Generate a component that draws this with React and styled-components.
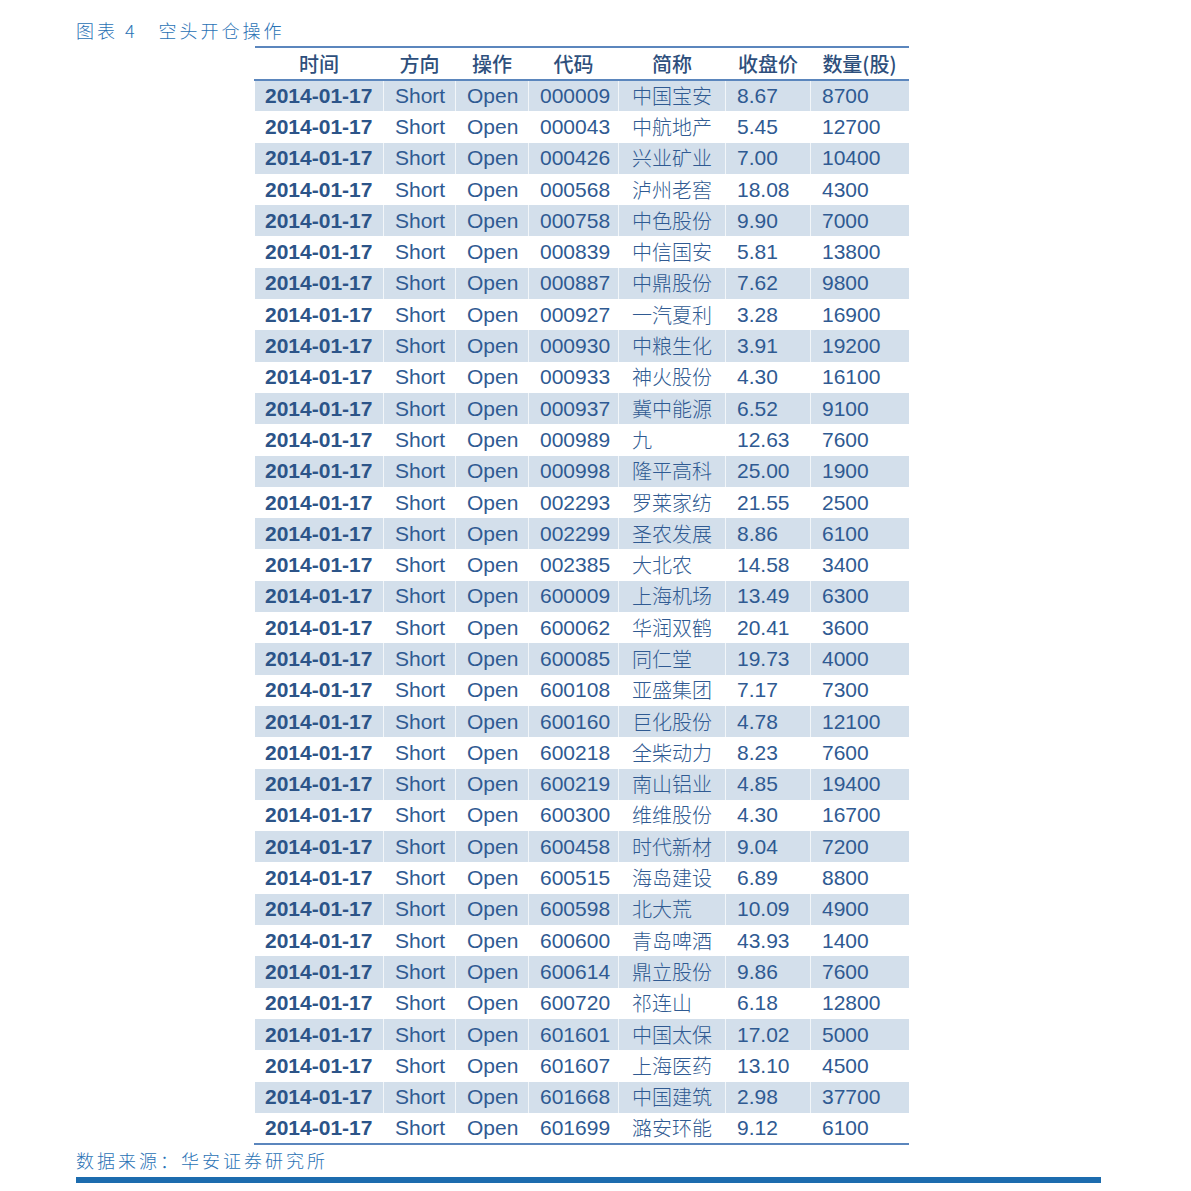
import styled, { createGlobalStyle } from 'styled-components'

const rows = [
  ['000009', '中国宝安', '8.67', '8700'],
  ['000043', '中航地产', '5.45', '12700'],
  ['000426', '兴业矿业', '7.00', '10400'],
  ['000568', '泸州老窖', '18.08', '4300'],
  ['000758', '中色股份', '9.90', '7000'],
  ['000839', '中信国安', '5.81', '13800'],
  ['000887', '中鼎股份', '7.62', '9800'],
  ['000927', '一汽夏利', '3.28', '16900'],
  ['000930', '中粮生化', '3.91', '19200'],
  ['000933', '神火股份', '4.30', '16100'],
  ['000937', '冀中能源', '6.52', '9100'],
  ['000989', '九', '12.63', '7600'],
  ['000998', '隆平高科', '25.00', '1900'],
  ['002293', '罗莱家纺', '21.55', '2500'],
  ['002299', '圣农发展', '8.86', '6100'],
  ['002385', '大北农', '14.58', '3400'],
  ['600009', '上海机场', '13.49', '6300'],
  ['600062', '华润双鹤', '20.41', '3600'],
  ['600085', '同仁堂', '19.73', '4000'],
  ['600108', '亚盛集团', '7.17', '7300'],
  ['600160', '巨化股份', '4.78', '12100'],
  ['600218', '全柴动力', '8.23', '7600'],
  ['600219', '南山铝业', '4.85', '19400'],
  ['600300', '维维股份', '4.30', '16700'],
  ['600458', '时代新材', '9.04', '7200'],
  ['600515', '海岛建设', '6.89', '8800'],
  ['600598', '北大荒', '10.09', '4900'],
  ['600600', '青岛啤酒', '43.93', '1400'],
  ['600614', '鼎立股份', '9.86', '7600'],
  ['600720', '祁连山', '6.18', '12800'],
  ['601601', '中国太保', '17.02', '5000'],
  ['601607', '上海医药', '13.10', '4500'],
  ['601668', '中国建筑', '2.98', '37700'],
  ['601699', '潞安环能', '9.12', '6100'],
]

const headers = ['时间', '方向', '操作', '代码', '简称', '收盘价', '数量(股)']
const widths = [129, 72, 73, 90, 107, 85, 98]

const GlobalStyle = createGlobalStyle`
  html, body {
    margin: 0;
    padding: 0;
    background: #ffffff;
  }
`

const Page = styled.div`
  width: 1191px;
  height: 1191px;
  padding: 18px 0 0 76px;
  box-sizing: border-box;
  display: flex;
  flex-direction: column;
`

const Caption = styled.div`
  font-family: "Noto Sans CJK SC", sans-serif;
  font-weight: 300;
  font-size: 18px;
  line-height: 24px;
  color: #2a72b5;
  letter-spacing: 3px;
  height: 28px;
  white-space: pre;
`

const Table = styled.table`
  margin-left: 178px;
  border-collapse: collapse;
  table-layout: fixed;
  width: 654px;
  border-top: 2px solid #5b86bd;
  border-bottom: 2px solid #5b86bd;
`

const HeadRow = styled.tr`
  height: 33px;
  border-bottom: 2px solid #5b86bd;
`

const Th = styled.th`
  font-family: "Noto Sans CJK SC", sans-serif;
  font-weight: 500;
  font-size: 20px;
  color: #2e4f7c;
  text-align: center;
  padding: 0;
  line-height: 30px;
`

const Row = styled.tr`
  height: 31.3px;
  background: ${(p) => (p.$striped ? '#d3dfeb' : '#ffffff')};
`

const Td = styled.td`
  font-family: ${(p) => (p.$cjk ? '"Noto Sans CJK SC", sans-serif' : '"Liberation Sans", Arial, sans-serif')};
  font-weight: ${(p) => (p.$bold ? 700 : p.$cjk ? 300 : 400)};
  font-size: ${(p) => (p.$cjk ? '20px' : '21px')};
  color: ${(p) => (p.$bold ? '#2c5488' : '#2f5a92')};
  padding: 0 0 0 ${(p) => p.$pad || 11}px;
  border-left: 1px solid ${(p) => (p.$first ? 'transparent' : 'rgba(255,255,255,0.7)')};
  white-space: nowrap;
  line-height: 30px;
`

const Source = styled.div`
  font-family: "Noto Sans CJK SC", sans-serif;
  font-weight: 300;
  font-size: 18px;
  line-height: 24px;
  color: #2a72b5;
  letter-spacing: 3px;
  margin-top: 3px;
`

const Bar = styled.div`
  width: 1025px;
  height: 6px;
  margin-top: 5px;
  background: #1c6cae;
`

export default function App() {
  return (
    <>
      <GlobalStyle />
      <Page>
        <Caption>{'图表 4   空头开仓操作'}</Caption>
        <Table>
          <colgroup>
            {widths.map((w, i) => (
              <col key={i} style={{ width: w }} />
            ))}
          </colgroup>
          <thead>
            <HeadRow>
              {headers.map((h) => (
                <Th key={h}>{h}</Th>
              ))}
            </HeadRow>
          </thead>
          <tbody>
            {rows.map((r, i) => (
              <Row key={r[0]} $striped={i % 2 === 0}>
                <Td $bold $first $pad={10}>2014-01-17</Td>
                <Td>Short</Td>
                <Td>Open</Td>
                <Td>{r[0]}</Td>
                <Td $cjk $pad={13}>{r[1]}</Td>
                <Td>{r[2]}</Td>
                <Td>{r[3]}</Td>
              </Row>
            ))}
          </tbody>
        </Table>
        <Source>数据来源：华安证券研究所</Source>
        <Bar />
      </Page>
    </>
  )
}
